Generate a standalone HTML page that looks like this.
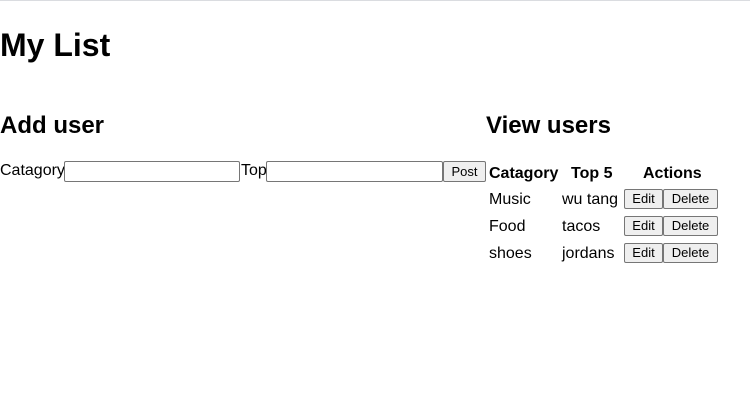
<!DOCTYPE html>
<html><head><style>
body{margin:0;width:750px;height:411px;background:#fff;font-family:"Liberation Sans",sans-serif;color:#000;position:relative;overflow:hidden}
.a{position:absolute;white-space:nowrap}
.line{position:absolute;left:0;top:0;width:750px;height:1px;background:#dadce0}
h1{position:absolute;left:0;top:26px;margin:0;font-size:32px;font-weight:bold;line-height:38px}
h2{position:absolute;margin:0;font-size:24px;font-weight:bold;line-height:28px}
.inp{position:absolute;top:161px;height:19px;border:1px solid #767676;border-radius:2px;background:#fff}
.btn{position:absolute;height:18px;border:1px solid #767676;border-radius:2px;background:#efefef;font-size:13px;line-height:18px;text-align:center;box-sizing:content-box}
.t{font-size:16px;line-height:18px}
.b{font-weight:bold}
</style></head><body>
<div class="line"></div>
<h1>My List</h1>
<h2 style="left:0;top:112px">Add user</h2>
<h2 style="left:486px;top:112px">View users</h2>
<div class="a t" style="left:0;top:162px">Catagory</div>
<div class="inp" style="left:64px;width:174px"></div>
<div class="a t" style="left:241px;top:162px">Top</div>
<div class="inp" style="left:266px;width:175px"></div>
<div class="btn" style="left:443px;top:161px;width:41px;height:19px;line-height:19px">Post</div>
<div class="a t b" style="left:489px;top:165px">Catagory</div>
<div class="a t b" style="left:571px;top:165px">Top 5</div>
<div class="a t b" style="left:643px;top:165px">Actions</div>
<div class="a t" style="left:489px;top:191px">Music</div>
<div class="a t" style="left:562px;top:191px">wu tang</div>
<div class="a t" style="left:489px;top:218px">Food</div>
<div class="a t" style="left:562px;top:218px">tacos</div>
<div class="a t" style="left:489px;top:245px">shoes</div>
<div class="a t" style="left:562px;top:245px">jordans</div>
<div class="btn" style="left:624px;top:189px;width:37px">Edit</div>
<div class="btn" style="left:663px;top:189px;width:53px">Delete</div>
<div class="btn" style="left:624px;top:216px;width:37px">Edit</div>
<div class="btn" style="left:663px;top:216px;width:53px">Delete</div>
<div class="btn" style="left:624px;top:243px;width:37px">Edit</div>
<div class="btn" style="left:663px;top:243px;width:53px">Delete</div>
</body></html>
